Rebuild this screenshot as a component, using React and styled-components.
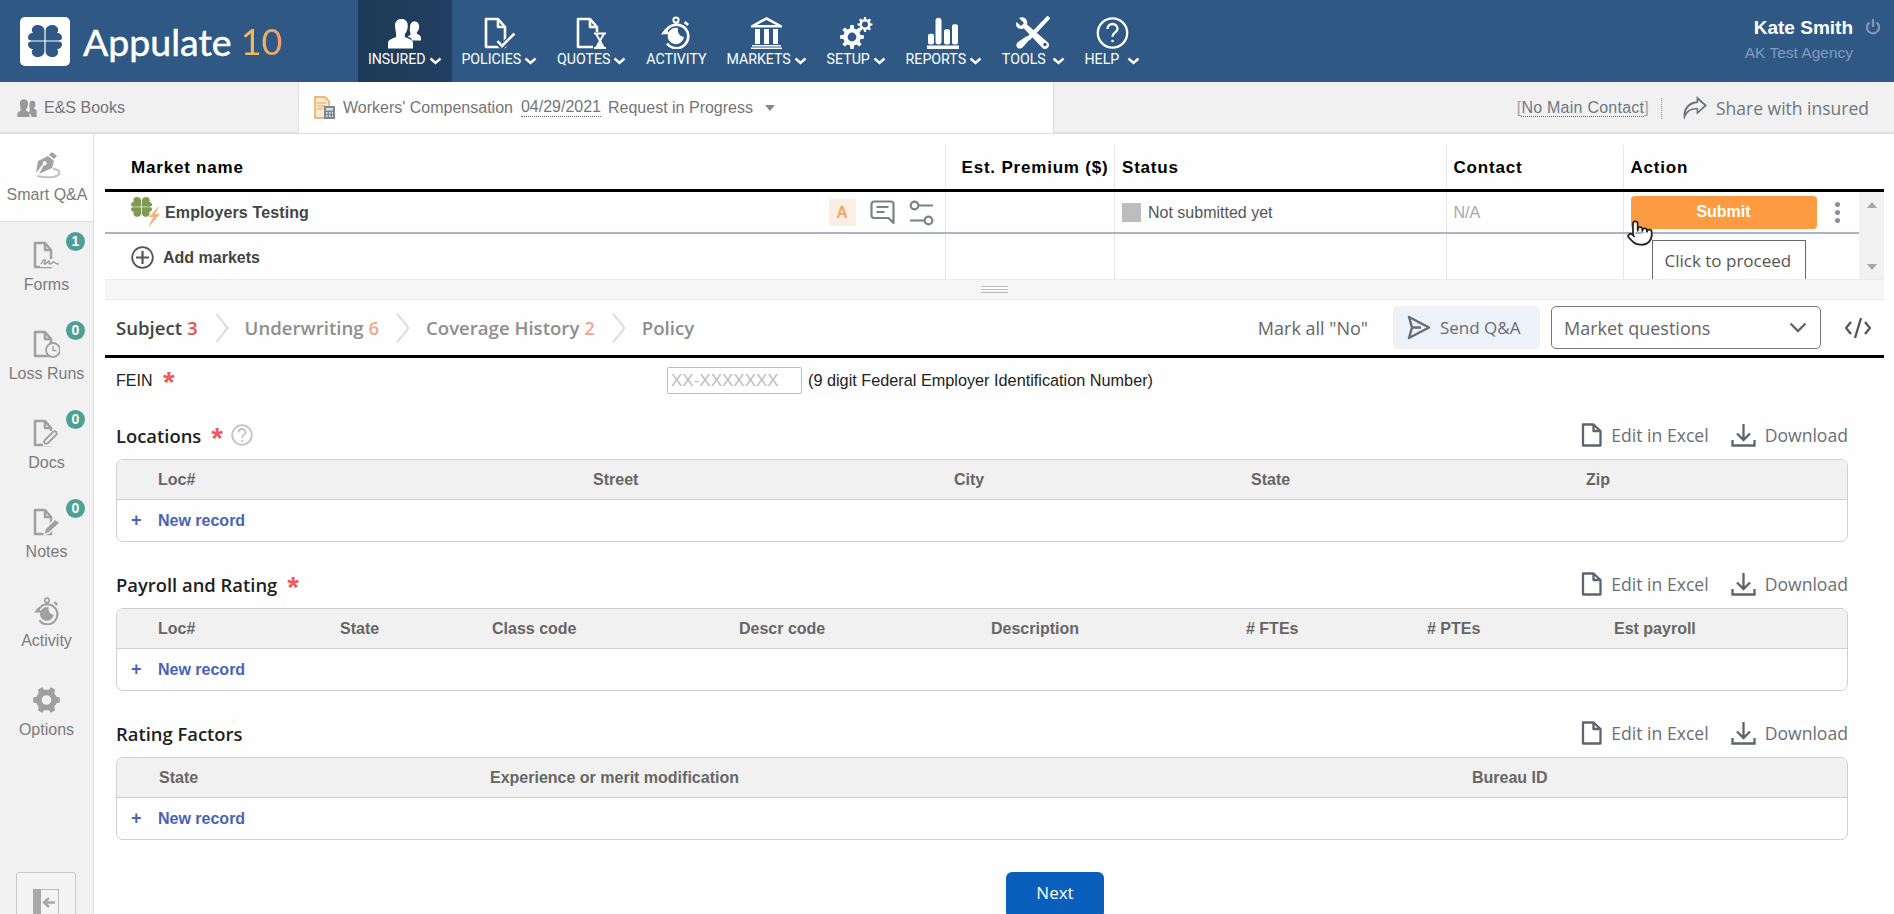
import React from "react";
import styled, { createGlobalStyle } from "styled-components";
import { Pointer } from "lucide-react";

const sans = `"Liberation Sans", Arial, sans-serif`;
const soft = `"Open Sans", "Noto Sans", sans-serif`;

// builds a cog outline with a hole, used by the setup and options icons
function gearPath(cx, cy, outer, inner, teeth, hole) {
	const pts = [];
	const step = (Math.PI * 2) / teeth;
	for (let i = 0; i < teeth; i++) {
		const a = i * step;
		[
			[-0.3, inner],
			[-0.18, outer],
			[0.18, outer],
			[0.3, inner],
		].forEach(([k, r]) => {
			const t = a + k * step;
			pts.push(`${(cx + r * Math.cos(t)).toFixed(2)} ${(cy + r * Math.sin(t)).toFixed(2)}`);
		});
	}
	const ring = `M${cx - hole} ${cy}a${hole} ${hole} 0 1 0 ${hole * 2} 0a${hole} ${hole} 0 1 0 ${-hole * 2} 0Z`;
	return `M${pts.join("L")}Z${ring}`;
}

const leaf = "M16.4 15.4V5.5C16.4 1.8 12.6 0 9.6 0 6 0 3.6 2.6 3.8 5.6 4 6.6 4.4 7.2 5 7.8 2 8 0 10.2 0 12.6 0 15.4 2.6 15.6 5 15.6Z";

function Clover({ color }) {
	return (
		<g fill={color}>
			<path d={leaf} />
			<path d={leaf} transform="translate(34 0) scale(-1 1)" />
			<path d={leaf} transform="translate(0 32) scale(1 -1)" />
			<path d={leaf} transform="translate(34 32) scale(-1 -1)" />
		</g>
	);
}

const docOutline = "M3 2h12l7 8v20H3z";

function DocBase({ color = "#fff", width = 2.6 }) {
	return (
		<g fill="none" stroke={color} strokeWidth={width} strokeLinejoin="round">
			<path d={docOutline} />
			<path d="M15 2v8h7" />
		</g>
	);
}

function InsuredIcon() {
	return (
		<svg width="33" height="32" viewBox="0 0 33 32" fill="#fff">
			<path d="M22 9.5a4.6 5.2 0 1 1 9.2 0c0 2.6-1 4.6-2.3 5.6v1.6c1.6.8 3.6 1.6 4.1 3.2v3.6H24c-.4-2-1.8-3-4.5-4.2l2.8-1v-3.2c-.9-1.2-.3-3.4-.3-5.6z" />
			<path d="M7 8.5C7 3.8 10.2 2 13.4 2s6.4 1.8 6.4 6.5c0 3.8-1.2 6.8-3 8.4v3c3 1.4 8.2 2.6 8.2 6v5.6H0v-5.6c0-3.4 5.2-4.6 8.1-6v-3C8.2 15.3 7 12.3 7 8.5z" />
		</svg>
	);
}

function PoliciesIcon() {
	return (
		<svg width="33" height="32" viewBox="0 0 33 32">
			<DocBase />
			<path d="M14 24l5 5.500L31.500 17" fill="none" stroke="#2f5984" strokeWidth="6" />
			<path d="M14.500 24l4.500 5L31.500 16.500" fill="none" stroke="#fff" strokeWidth="2.600" />
		</svg>
	);
}

function QuotesIcon() {
	return (
		<svg width="33" height="32" viewBox="0 0 33 32">
			<DocBase />
			<rect x="18" y="15" width="15" height="17" fill="#2f5984" />
			<path d="M19 16.500h12M19 31h12M21 16.500l4 7.500-4 7h8l-4-7 4-7.500" fill="none" stroke="#fff" strokeWidth="2" />
			<path d="M25 26l3 4.500h-6z" fill="#fff" />
		</svg>
	);
}

function StopwatchIcon({ color = "#fff", width = 30, height = 33 }) {
	return (
		<svg width={width} height={height} viewBox="0 0 30 33">
			<circle cx="15" cy="4" r="2.600" fill="none" stroke={color} strokeWidth="2" />
			<path d="M15 6.500v2" stroke={color} strokeWidth="2" />
			<path d="M4.500 16A11.800 11.800 0 1 1 6 27.500" fill="none" stroke={color} strokeWidth="2.600" />
			<path d="M0 18.500l4.300-6 5 5.500z" fill={color} />
			<path d="M24.500 5l3.500 3-1.800 2-3.500-3z" fill={color} />
			<path d="M17 12A8.200 8.200 0 1 0 23 21A7 7 0 0 1 17 12Z" fill={color} />
		</svg>
	);
}

function MarketsIcon() {
	return (
		<svg width="33" height="32" viewBox="0 0 33 32" fill="#fff">
			<path d="M16.500 0L32 8.500v2H1v-2zM16.500 3L7 8h19z" fillRule="evenodd" />
			<path d="M5 12h5v15H5zM14 12h5v15h-5zM23 12h5v15h-5z" fillRule="evenodd" />
			<path d="M2 28h29v1.500H2zM1 30.500h31V32H1z" />
		</svg>
	);
}

function SetupIcon() {
	return (
		<svg width="33" height="32" viewBox="0 0 33 32" fill="#fff" fillRule="evenodd">
			<path d={gearPath(12, 20, 12, 8.8, 8, 4.4)} />
			<path d={gearPath(25, 7.500, 7.500, 5.500, 8, 3)} />
		</svg>
	);
}

function ReportsIcon() {
	return (
		<svg width="33" height="32" viewBox="0 0 33 32" fill="#fff">
			<rect x="1" y="16.700" width="6" height="10.800" rx="2" />
			<rect x="8.500" y="0.700" width="6" height="26.800" rx="3" />
			<rect x="17" y="12.300" width="6" height="15.200" rx="2" />
			<rect x="25" y="7.300" width="6" height="20.200" rx="2" />
			<rect x="0" y="28.500" width="32" height="3.500" />
		</svg>
	);
}

function ToolsIcon() {
	return (
		<svg width="34" height="33" viewBox="0 0 34 33">
			<path d="M33 1L12 23" stroke="#fff" strokeWidth="4" />
			<path d="M11 20l3 3-7 8c-2 2-5 2-6 0s-1-3 1-5z" fill="#fff" />
			<path d="M3 2c4-2 7 0 8 3 .4 1.400.2 2.600 0 3.500l21 18c2 2 1 5-1 6s-4 .5-5-1L8 12.500c-3 1-6 .5-7.500-2C0 9 0 7 .5 6L5 10l3-3z" fill="#fff" />
			<circle cx="29" cy="28.500" r="1.700" fill="#2f5984" />
		</svg>
	);
}

function HelpIcon() {
	return (
		<svg width="33" height="32" viewBox="0 0 33 32" fill="none" stroke="#fff">
			<circle cx="16.500" cy="16" r="14.700" strokeWidth="2.300" />
			<path d="M11.500 12c0-3 2.200-5 5-5s5 2 5 4.700c0 3.800-5 3.600-5 8" strokeWidth="2.300" />
			<circle cx="16.500" cy="24" r="1.300" fill="#fff" stroke="none" />
		</svg>
	);
}

function PenIcon() {
	return (
		<svg width="34" height="28" viewBox="0 0 34 28">
			<path d="M22 0l5 4-3 3-5-4z" fill="#a3a3a3" />
			<path d="M18 4l6 5-2 7-13 6 5-9a2 2 0 1 0-1-1L6 21l2-12z" fill="#a3a3a3" />
			<path d="M7 24c8 2 20 2 22-2s-4-5-6-5" fill="none" stroke="#c2c2c2" strokeWidth="2" />
		</svg>
	);
}

function SideDoc({ children }) {
	return (
		<svg width="27" height="28" viewBox="0 0 27 28">
			<g fill="none" stroke="#a0a0a0" strokeWidth="2.500" strokeLinejoin="round">
				<path d="M2 2h10l6 7v17H2z" />
				<path d="M12 2v7h6" />
			</g>
			{children}
		</svg>
	);
}

function OptionsIcon() {
	return (
		<svg width="27" height="28" viewBox="0 0 27 28" fill="#a0a0a0" fillRule="evenodd">
			<path d={gearPath(13.500, 14, 13.500, 10.500, 6, 4.800)} />
		</svg>
	);
}

function StepChevron() {
	return (
		<StepArrow width="14" height="30" viewBox="0 0 14 30" fill="none" stroke="#dcdcdc" strokeWidth="2">
			<path d="M1.500 1l11 14-11 14" />
		</StepArrow>
	);
}

const sideItems = [
	{ label: "Forms", count: 1, icon: (
		<SideDoc>
			<rect x="7" y="18" width="20" height="8" fill="#f1f1f1" />
			<path d="M8 23c2-3 3-5 4-4s-2 4 0 4 3-4 4-3-1 3 1 3 3-3 4-2 1 2 5 2" fill="none" stroke="#a0a0a0" strokeWidth="1.500" />
		</SideDoc>
	) },
	{ label: "Loss Runs", count: 0, icon: (
		<SideDoc>
			<circle cx="20" cy="20" r="7" fill="#f1f1f1" stroke="#a0a0a0" strokeWidth="1.800" />
			<path d="M20 16v4.500h3.500" fill="none" stroke="#a0a0a0" strokeWidth="1.400" />
		</SideDoc>
	) },
	{ label: "Docs", count: 0, icon: (
		<SideDoc>
			<rect x="10" y="12" width="17" height="15" fill="#f1f1f1" />
			<path d="M24 15l-9 9c-3 2-5-1-3-3l8-8c2-2 5 0 3 3l-7 7" fill="none" stroke="#a0a0a0" strokeWidth="1.800" />
		</SideDoc>
	) },
	{ label: "Notes", count: 0, icon: (
		<SideDoc>
			<path d="M11 27l1-6 10-10 5 4-11 10z" fill="#a0a0a0" stroke="#f1f1f1" strokeWidth="1.500" />
		</SideDoc>
	) },
	{ label: "Activity", icon: <StopwatchIcon color="#a0a0a0" width={26} height={28} /> },
	{ label: "Options", icon: <OptionsIcon /> },
];

const navItems = [
	{ label: "INSURED", icon: <InsuredIcon />, active: true, menu: true },
	{ label: "POLICIES", icon: <PoliciesIcon />, menu: true },
	{ label: "QUOTES", icon: <QuotesIcon />, menu: true },
	{ label: "ACTIVITY", icon: <StopwatchIcon /> },
	{ label: "MARKETS", icon: <MarketsIcon />, menu: true },
	{ label: "SETUP", icon: <SetupIcon />, menu: true },
	{ label: "REPORTS", icon: <ReportsIcon />, menu: true },
	{ label: "TOOLS", icon: <ToolsIcon />, menu: true, gap: 6 },
	{ label: "HELP", icon: <HelpIcon />, menu: true, gap: 8 },
];

const recordTables = [
	{
		title: "Locations",
		required: true,
		help: true,
		pad: 41,
		columns: [
			["Loc#", 435],
			["Street", 361],
			["City", 297],
			["State", 335],
			["Zip", 200],
		],
	},
	{
		title: "Payroll and Rating",
		required: true,
		pad: 41,
		columns: [
			["Loc#", 182],
			["State", 152],
			["Class code", 247],
			["Descr code", 252],
			["Description", 255],
			["# FTEs", 181],
			["# PTEs", 187],
			["Est payroll", 200],
		],
	},
	{
		title: "Rating Factors",
		pad: 42,
		columns: [
			["State", 331],
			["Experience or merit modification", 982],
			["Bureau ID", 300],
		],
	},
];

function App() {
	return (
		<Page>
			<GlobalStyle />
			<TopBar>
				<LogoBlock>
					<LogoMark>
						<svg width="34" height="32" viewBox="0 0 34 32">
							<Clover color="#2f5984" />
						</svg>
					</LogoMark>
					<LogoText>Appulate</LogoText>
					<LogoTen>10</LogoTen>
				</LogoBlock>
				<Nav>
					{navItems.map(({ label, icon, active, menu, gap }) => (
						<NavItem key={label} $active={active}>
							<NavIcon>{icon}</NavIcon>
							<NavLabel>
								{label}
								{menu && (
									<NavChevron $gap={gap} width="13" height="8" viewBox="0 0 13 8">
										<path d="M1.500 1.500l5 4.500 5-4.500" fill="none" stroke="#fff" strokeWidth="2.400" />
									</NavChevron>
								)}
							</NavLabel>
						</NavItem>
					))}
				</Nav>
				<UserBlock>
					<UserText>
						<UserName>Kate Smith</UserName>
						<UserAgency>AK Test Agency</UserAgency>
					</UserText>
					<svg width="14" height="17" viewBox="0 0 14 17" fill="none" stroke="#7f98b5" strokeWidth="2.200">
						<path d="M7 1v8M3.500 4.500a6 6 0 1 0 7 0" />
					</svg>
				</UserBlock>
			</TopBar>

			<SubBar>
				<BooksTab>
					<svg width="22" height="18" viewBox="0 0 33 28" fill="#999">
						<path d="M22 8a4.600 5.200 0 1 1 9.200 0c0 2.600-1 4.600-2.300 5.600v1.600c1.600.8 4.100 1.600 4.100 3.200V28H25c0-4-2-5-5.500-6.500l2.800-2v-6c-.9-1.200-.3-3.300-.3-5.500z" />
						<path d="M7 7C7 2.300 10.200.5 13.400.5s6.400 1.800 6.400 6.500c0 3.800-1.200 6.800-3 8.400v3c3 1.400 5.200 2.600 5.200 6V28H3v-3.600c0-3.400 2.200-4.600 5.100-6v-3C8.200 13.800 7 10.800 7 7z" />
					</svg>
					E&amp;S Books
				</BooksTab>
				<RequestTab>
					<svg width="22" height="23" viewBox="0 0 22 23">
						<path d="M1 1h10l4 4v17H1z" fill="#fbe9cf" stroke="#eda24e" strokeWidth="1.400" />
						<path d="M3 7h9M3 10h9M3 13h6" stroke="#eda24e" strokeWidth="1" />
						<rect x="10" y="10" width="11" height="13" fill="#7b8794" />
						<rect x="12" y="12" width="7" height="2.500" fill="#d8e0e8" />
						<path d="M12 17h1.500M15 17h1.500M18 17h1M12 20h1.500M15 20h1.500M18 20h1" stroke="#fff" strokeWidth="1.500" />
					</svg>
					<RequestText>Workers' Compensation</RequestText>
					<DottedDate>04/29/2021</DottedDate>
					<RequestText>Request in Progress</RequestText>
					<Caret />
				</RequestTab>
				<ContactArea>
					<MainContact>
						[<DottedText>No Main Contact</DottedText>]
					</MainContact>
					<DottedDivider />
					<ShareLink>
						<svg width="25" height="24" viewBox="0 0 24 23" fill="#6c7078">
							<path d="M14 0l10 9-10 9v-5C8 13 5 15 2 23 0 14 4 6 14 5zM15.500 4v2.600C9.500 7 5 10 3.500 16 6.500 12.500 10 11.300 15.500 11.500v3l6-5.500z" fillRule="evenodd" />
						</svg>
						Share with insured
					</ShareLink>
				</ContactArea>
			</SubBar>

			<Body>
				<Sidebar>
					<SideActive>
						<PenIcon />
						<SideLabel>Smart Q&amp;A</SideLabel>
					</SideActive>
					{sideItems.map(({ label, count, icon }) => (
						<SideItem key={label}>
							{icon}
							{count !== undefined && <CountBadge>{count}</CountBadge>}
							<SideLabel>{label}</SideLabel>
						</SideItem>
					))}
					<CollapseButton>
						<svg width="26" height="27" viewBox="0 0 26 27">
							<rect x="0" y="0" width="26" height="27" rx="2" fill="none" stroke="#a9a9a9" strokeWidth="1.500" />
							<rect x="0" y="0" width="8" height="27" fill="#a9a9a9" />
							<path d="M22 13.500H12M16 9l-5 4.500 5 4.500" fill="none" stroke="#a9a9a9" strokeWidth="2.500" />
						</svg>
					</CollapseButton>
				</Sidebar>

				<Main>
					<MarketHead>
						<MarketHeadCell>Market name</MarketHeadCell>
						<MarketHeadCell $center>Est. Premium ($)</MarketHeadCell>
						<MarketHeadCell>Status</MarketHeadCell>
						<MarketHeadCell>Contact</MarketHeadCell>
						<MarketHeadCell>Action</MarketHeadCell>
					</MarketHead>
					<MarketBody>
						<MarketRows>
							<MarketRow>
								<NameCell>
									<svg width="30" height="32" viewBox="0 0 30 32">
										<g transform="scale(.62)">
											<Clover color="#7f9b52" />
										</g>
										<path d="M27 10l-9 10h4l-5 11 12-14h-5l4-7z" fill="#f7b27a" />
									</svg>
									<MarketName>Employers Testing</MarketName>
									<RowTools>
										<ABadge>A</ABadge>
										<svg width="25" height="25" viewBox="0 0 25 25" fill="none" stroke="#7d8288" strokeWidth="2.200" strokeLinejoin="round">
											<path d="M4 1.500h17a2.500 2.500 0 0 1 2.500 2.500v19l-5-5H4A2.500 2.500 0 0 1 1.500 15.500V4A2.500 2.500 0 0 1 4 1.500z" />
											<path d="M6.500 7h12M6.500 12h8" />
										</svg>
										<svg width="25" height="26" viewBox="0 0 25 26" fill="none" stroke="#7d8288" strokeWidth="2.200">
											<circle cx="5.500" cy="5.500" r="3.800" />
											<path d="M9.500 5.500H24M1 20.500h14.500" />
											<circle cx="19.500" cy="20.500" r="3.800" />
										</svg>
									</RowTools>
								</NameCell>
								<PlainCell />
								<PlainCell>
									<StatusSquare />
									Not submitted yet
								</PlainCell>
								<PlainCell $muted>N/A</PlainCell>
								<ActionCell>
									<SubmitButton>Submit</SubmitButton>
									<MoreDots>
										<i />
										<i />
										<i />
									</MoreDots>
									<HandCursor>
										<Pointer size={28} fill="#fff" color="#222" strokeWidth={1.5} />
									</HandCursor>
								</ActionCell>
							</MarketRow>
							<MarketRow $last>
								<AddCell>
									<svg width="23" height="23" viewBox="0 0 23 23" fill="none" stroke="#555" strokeWidth="1.800">
										<circle cx="11.500" cy="11.500" r="10.300" />
										<path d="M11.500 5v13M5 11.500h13" strokeWidth="2.200" />
									</svg>
									<AddLabel>Add markets</AddLabel>
								</AddCell>
								<PlainCell />
								<PlainCell />
								<PlainCell />
								<ActionCell>
									<Tooltip>Click to proceed</Tooltip>
								</ActionCell>
							</MarketRow>
						</MarketRows>
						<ScrollTrack>
							<ScrollArrow />
							<ScrollArrow $down />
						</ScrollTrack>
					</MarketBody>
					<Splitter>
						<SplitGrip />
					</Splitter>

					<TabStrip>
						<Steps>
							<Step $active>
								Subject <StepCount $active>3</StepCount>
							</Step>
							<StepChevron />
							<Step>
								Underwriting <StepCount>6</StepCount>
							</Step>
							<StepChevron />
							<Step>
								Coverage History <StepCount>2</StepCount>
							</Step>
							<StepChevron />
							<Step>Policy</Step>
						</Steps>
						<StripTools>
							<MarkAll>Mark all "No"</MarkAll>
							<SendButton>
								<svg width="24" height="25" viewBox="0 0 24 25" fill="none" stroke="#666c76" strokeWidth="2.400" strokeLinejoin="round">
									<path d="M2 2l20 10.500L2 23l3-10.500zM5 12.500h9" />
								</svg>
								Send Q&amp;A
							</SendButton>
							<QuestionSelect>
								Market questions
								<svg width="18" height="11" viewBox="0 0 18 11" fill="none" stroke="#666" strokeWidth="2.400">
									<path d="M1.500 1.500L9 9l7.500-7.500" />
								</svg>
							</QuestionSelect>
							<CodeToggle>
								<svg width="26" height="22" viewBox="0 0 26 22" fill="none" stroke="#555" strokeWidth="2.300">
									<path d="M6 5l-5 6 5 6M20 5l5 6-5 6M16 1l-6 20" />
								</svg>
							</CodeToggle>
						</StripTools>
					</TabStrip>

					<Form>
						<FeinRow>
							<FeinLabel>
								FEIN <Star>*</Star>
							</FeinLabel>
							<FeinInput placeholder="XX-XXXXXXX" />
							<FeinHint>(9 digit Federal Employer Identification Number)</FeinHint>
						</FeinRow>
						<Sections>
							{recordTables.map(({ title, required, help, pad, columns }) => (
								<section key={title}>
									<SectionHead>
										<SectionTitle>
											{title}
											{required && <Star>*</Star>}
											{help && (
												<svg width="22" height="22" viewBox="0 0 22 22" fill="none" stroke="#c4c4c4" strokeWidth="1.800">
													<circle cx="11" cy="11" r="9.800" />
													<path d="M7.500 8.500c0-2 1.500-3.500 3.500-3.500s3.500 1.500 3.500 3.200c0 2.800-3.500 2.600-3.500 5.800M11 16v2" />
												</svg>
											)}
										</SectionTitle>
										<SectionActions>
											<SectionAction>
												<svg width="21" height="24" viewBox="0 0 21 24" fill="none" stroke="#5f636b" strokeWidth="2.300" strokeLinejoin="round">
													<path d="M2 1.500h10.500L19.500 8v14.500H2z" />
													<path d="M12.500 2v6h6" />
												</svg>
												Edit in Excel
											</SectionAction>
											<SectionAction>
												<svg width="25" height="24" viewBox="0 0 25 24" fill="none" stroke="#5f636b" strokeWidth="2.300">
													<path d="M12.500 1v15M6 10.500l6.500 6.500L19 10.500M1.500 17v5.500h22V17" />
												</svg>
												Download
											</SectionAction>
										</SectionActions>
									</SectionHead>
									<RecordBox>
										<RecordHead $pad={pad} $cols={columns.map(([, w]) => `${w}px`).join(" ")}>
											{columns.map(([name]) => (
												<span key={name}>{name}</span>
											))}
										</RecordHead>
										<NewRecord>
											<NewPlus>+</NewPlus>
											New record
										</NewRecord>
									</RecordBox>
								</section>
							))}
						</Sections>
						<NextButton>Next</NextButton>
					</Form>
				</Main>
			</Body>
		</Page>
	);
}

export default App;

const GlobalStyle = createGlobalStyle`
	html, body {
		margin: 0;
		padding: 0;
		background: #fefefe;
		overflow: hidden;
	}
	* {
		box-sizing: border-box;
	}
	button, input {
		font-family: inherit;
	}
`;

const Page = styled.div`
	width: 1894px;
	height: 914px;
	overflow: hidden;
	font-family: ${sans};
	font-size: 16px;
	background: #fefefe;
	display: flex;
	flex-direction: column;
`;

const TopBar = styled.header`
	height: 82px;
	flex-shrink: 0;
	display: flex;
	background: #2f5984;
`;

const LogoBlock = styled.div`
	width: 358px;
	flex-shrink: 0;
	display: flex;
	align-items: center;
	padding: 0 0 0 20px;
`;

const LogoMark = styled.div`
	width: 50px;
	height: 49px;
	background: #fff;
	border-radius: 5px;
	display: flex;
	align-items: center;
	justify-content: center;
	margin-right: 13px;
`;

const LogoText = styled.span`
	font-family: Lato, sans-serif;
	font-size: 37.5px;
	font-weight: 400;
	color: #fff;
	-webkit-text-stroke: 0.5px #fff;
`;

const LogoTen = styled.span`
	font-family: Lato, sans-serif;
	font-size: 36px;
	font-weight: 400;
	margin-left: 9px;
	background: linear-gradient(90deg, #f2c14e, #ef9f6e);
	-webkit-background-clip: text;
	background-clip: text;
	color: transparent;
`;

const Nav = styled.nav`
	display: flex;
	flex: 1;
`;

const NavItem = styled.div`
	padding: 16px 9.9px 0;
	display: flex;
	flex-direction: column;
	align-items: center;
	background: ${(p) => (p.$active ? "linear-gradient(90deg, #1e3a58, #213f60)" : "transparent")};
`;

const NavIcon = styled.div`
	height: 33px;
	display: flex;
	align-items: center;
	justify-content: center;
`;

const NavLabel = styled.div`
	display: flex;
	align-items: center;
	margin-top: 1px;
	height: 18px;
	font-family: Roboto, sans-serif;
	font-size: 14.2px;
	color: #fff;
`;

const NavChevron = styled.svg`
	margin-left: ${(p) => p.$gap || 3}px;
	margin-top: 3px;
`;

const UserBlock = styled.div`
	display: flex;
	align-items: flex-start;
	gap: 13px;
	padding: 18px 14px 0 0;
`;

const UserText = styled.div`
	display: flex;
	flex-direction: column;
	align-items: flex-end;
`;

const UserName = styled.span`
	font-weight: 700;
	font-size: 19px;
	line-height: 20px;
	color: #fff;
`;

const UserAgency = styled.span`
	margin-top: 5px;
	font-size: 15.5px;
	line-height: 20px;
	color: #7f9cbf;
`;

const SubBar = styled.div`
	height: 52px;
	flex-shrink: 0;
	display: flex;
	background: #f1f1f2;
	border-bottom: 2px solid #dfdfdf;
	color: #757575;
`;

const BooksTab = styled.div`
	width: 298px;
	display: flex;
	align-items: center;
	gap: 7px;
	padding: 1px 0 0 15px;
`;

const RequestTab = styled.div`
	width: 756px;
	display: flex;
	align-items: center;
	padding-left: 15px;
	background: #fff;
	border-left: 1px solid #e2e2e2;
	border-right: 1px solid #dcdcdc;
	margin-bottom: -1px;
`;

const RequestText = styled.span`
	margin-left: 7px;
`;

const DottedDate = styled.span`
	margin-left: 8px;
	border-bottom: 1px dotted #666;
	line-height: 18px;
`;

const Caret = styled.span`
	margin-left: 12px;
	border-left: 5px solid transparent;
	border-right: 5px solid transparent;
	border-top: 6px solid #888;
`;

const ContactArea = styled.div`
	flex: 1;
	display: flex;
	align-items: center;
	justify-content: flex-end;
	padding: 2px 25px 0 0;
`;

const MainContact = styled.span`
	color: #a0a0a0;
	letter-spacing: 0.25px;
`;

const DottedText = styled.span`
	border-bottom: 1px dotted #666;
	color: #6d7783;
`;

const DottedDivider = styled.span`
	height: 21px;
	margin: 0 20px 0 12px;
	border-left: 1px dotted #888;
`;

const ShareLink = styled.span`
	display: flex;
	align-items: center;
	gap: 9px;
	font-family: ${soft};
	font-size: 17.5px;
	color: #70757c;
`;

const Body = styled.div`
	flex: 1;
	display: flex;
	min-height: 0;
`;

const Sidebar = styled.aside`
	width: 94px;
	flex-shrink: 0;
	display: flex;
	flex-direction: column;
	overflow: hidden;
	background: #f1f1f1;
	border-right: 1px solid #e2e2e2;
`;

const SideLabel = styled.span`
	color: #7b7b7b;
	line-height: 20px;
	white-space: nowrap;
`;

const SideItem = styled.div`
	position: relative;
	height: 89px;
	flex-shrink: 0;
	display: flex;
	flex-direction: column;
	align-items: center;
	justify-content: flex-start;
	gap: 6px;
	padding-top: 19px;
`;

const SideActive = styled(SideItem)`
	height: 88px;
	width: 94px;
	background: #fefefe;
	border-bottom: 1px solid #dedede;
	padding-top: 18px;
	gap: 5px;
`;

const CountBadge = styled.span`
	position: absolute;
	top: 10px;
	left: 66px;
	width: 19px;
	height: 19px;
	border-radius: 50%;
	background: #4d9f97;
	color: #fff;
	font-size: 14px;
	font-weight: 700;
	line-height: 19px;
	text-align: center;
`;

const CollapseButton = styled.div`
	flex-shrink: 0;
	width: 60px;
	height: 62px;
	margin: 116px 0 0 16px;
	padding: 16px 0 0 16px;
	border: 1px solid #c9c9c9;
	border-radius: 3px;
	background: #f4f4f4;
`;

const Main = styled.main`
	flex: 1;
	min-width: 0;
	display: flex;
	flex-direction: column;
	padding: 0 10px 0 11px;
`;

const MarketHead = styled.div`
	height: 58px;
	flex-shrink: 0;
	display: grid;
	grid-template-columns: 839.5px 169.5px 331.5px 177px 261.5px;
	padding-top: 11px;
	border-bottom: 3px solid #000;
`;

const MarketHeadCell = styled.div`
	display: flex;
	align-items: center;
	padding: 2px 0 0 ${(p) => (p.$center ? "16px" : "7px")};
	font-size: 17px;
	font-weight: 700;
	letter-spacing: 0.8px;
	color: #000;
	white-space: nowrap;
	&:first-child {
		padding-left: 26px;
	}
	& + & {
		border-left: 1px solid #e6e6e6;
	}
`;

const MarketBody = styled.div`
	display: flex;
	flex-shrink: 0;
`;

const MarketRows = styled.div`
	width: 1754px;
	flex-shrink: 0;
`;

const MarketRow = styled.div`
	display: grid;
	grid-template-columns: 839.5px 169.5px 331.5px 177px 236.5px;
	height: ${(p) => (p.$last ? "45px" : "42px")};
	overflow: ${(p) => (p.$last ? "hidden" : "visible")};
	border-bottom: ${(p) => (p.$last ? "none" : "2px solid #acb1c6")};
`;

const NameCell = styled.div`
	display: flex;
	align-items: center;
	padding: 1px 0 0 26px;
`;

const AddCell = styled(NameCell)`
	padding-top: 2px;
`;

const MarketName = styled.span`
	margin-left: 4px;
	font-weight: 700;
	letter-spacing: 0.12px;
	color: #444;
`;

const AddLabel = styled.span`
	margin-left: 9px;
	font-weight: 700;
	color: #444;
`;

const RowTools = styled.div`
	margin-left: auto;
	margin-right: 11px;
	display: flex;
	align-items: center;
	gap: 14px;
`;

const ABadge = styled.span`
	width: 27px;
	height: 27px;
	border-radius: 2px;
	background: #fbeee4;
	color: #f2a76b;
	font-weight: 700;
	text-align: center;
	line-height: 27px;
`;

const PlainCell = styled.div`
	position: relative;
	display: flex;
	align-items: center;
	padding: 1px 0 0 7px;
	border-left: 1px solid #e6e6e6;
	color: ${(p) => (p.$muted ? "#a9a9a9" : "#555")};
`;

const StatusSquare = styled.span`
	width: 19px;
	height: 19px;
	margin-right: 7px;
	background: #bdbdbd;
`;

const ActionCell = styled(PlainCell)`
	padding: 0 0 0 7px;
`;

const SubmitButton = styled.button`
	width: 186px;
	height: 33px;
	border: none;
	border-radius: 4px;
	background: #fd9b42;
	color: #fff;
	font-size: 16px;
	font-weight: 700;
`;

const MoreDots = styled.span`
	margin-left: 18px;
	display: flex;
	flex-direction: column;
	gap: 3px;
	i {
		width: 5px;
		height: 5px;
		border-radius: 50%;
		background: #8b8f96;
	}
`;

const HandCursor = styled.span`
	position: absolute;
	top: 27px;
	left: 2px;
	z-index: 3;
	display: flex;
`;

const Tooltip = styled.div`
	position: absolute;
	top: 6px;
	left: 28px;
	width: 154px;
	height: 60px;
	padding: 7px 0 0 12px;
	border: 1px solid #666;
	background: #fff;
	font-family: ${soft};
	font-size: 17px;
	line-height: 26px;
	color: #555;
	white-space: nowrap;
`;

const ScrollTrack = styled.div`
	width: 25px;
	flex-shrink: 0;
	display: flex;
	flex-direction: column;
	justify-content: space-between;
	align-items: center;
	padding: 10px 0 9px;
	background: #f1f1f1;
`;

const ScrollArrow = styled.span`
	border-left: 5px solid transparent;
	border-right: 5px solid transparent;
	${(p) => (p.$down ? "border-top: 6px solid #a8a8a8;" : "border-bottom: 6px solid #a8a8a8;")}
`;

const Splitter = styled.div`
	height: 21px;
	flex-shrink: 0;
	display: flex;
	align-items: center;
	justify-content: center;
	background: #f6f6f6;
	border-top: 1px solid #ececec;
	border-bottom: 1px solid #ececec;
`;

const SplitGrip = styled.span`
	width: 27px;
	height: 7px;
	margin-left: -1px;
	border-top: 1px solid #bbb;
	border-bottom: 1px solid #bbb;
	background: linear-gradient(#fff 0 2px, #bbb 2px 3px, #f6f6f6 3px);
`;

const TabStrip = styled.div`
	height: 58px;
	flex-shrink: 0;
	display: flex;
	align-items: center;
	justify-content: space-between;
	padding: 0 13px 0 11px;
	border-bottom: 3px solid #000;
`;

const Steps = styled.div`
	display: flex;
	align-items: center;
	font-family: ${soft};
	font-size: 18.6px;
	font-weight: 600;
`;

const Step = styled.span`
	color: ${(p) => (p.$active ? "#444" : "#8e8e8e")};
`;

const StepCount = styled.span`
	color: ${(p) => (p.$active ? "#e0544c" : "#f0a68f")};
`;

const StepArrow = styled.svg`
	margin: 0 16px 0 17px;
`;

const StripTools = styled.div`
	display: flex;
	align-items: center;
`;

const MarkAll = styled.span`
	font-family: ${soft};
	font-size: 18px;
	color: #666;
	margin-right: 25px;
`;

const SendButton = styled.div`
	width: 147px;
	height: 43px;
	display: flex;
	align-items: center;
	gap: 9px;
	padding-left: 14px;
	border-radius: 5px;
	background: #edf1f8;
	font-family: ${soft};
	font-size: 17px;
	color: #666c76;
`;

const QuestionSelect = styled.div`
	width: 270px;
	height: 43px;
	margin-left: 11px;
	display: flex;
	align-items: center;
	justify-content: space-between;
	padding: 0 13px 0 12px;
	border: 1px solid #777;
	border-radius: 5px;
	font-family: ${soft};
	font-size: 18px;
	color: #666;
`;

const CodeToggle = styled.div`
	margin-left: 24px;
	display: flex;
`;

const Form = styled.div`
	padding: 9px 36px 0 11px;
	display: flex;
	flex-direction: column;
`;

const FeinRow = styled.div`
	height: 27px;
	display: flex;
	align-items: center;
`;

const FeinLabel = styled.label`
	width: 551px;
	color: #222;
	font-size: 16px;
`;

const Star = styled.span`
	margin-left: 6px;
	font-family: ${sans};
	font-size: 30px;
	font-weight: 700;
	line-height: 16px;
	color: #ef5a5a;
	vertical-align: -6px;
`;

const FeinInput = styled.input`
	width: 135px;
	height: 27px;
	padding: 0 3px;
	border: 1px solid #bdbdbd;
	border-radius: 2px;
	font-size: 17px;
	background: #fff;
	&::placeholder {
		color: #bdbdbd;
		opacity: 1;
	}
`;

const FeinHint = styled.span`
	margin-left: 6px;
	font-size: 16.25px;
	color: #222;
`;

const Sections = styled.div`
	margin-top: 25px;
	display: flex;
	flex-direction: column;
	gap: 26px;
`;

const SectionHead = styled.div`
	height: 40px;
	display: flex;
	align-items: center;
	justify-content: space-between;
	padding-bottom: 8px;
`;

const SectionTitle = styled.h3`
	margin: 0;
	display: flex;
	align-items: center;
	gap: 8px;
	font-family: ${soft};
	font-size: 18.4px;
	font-weight: 600;
	color: #1f1f1f;
	& > span {
		margin-left: 2px;
		padding-top: 6px;
	}
`;

const SectionActions = styled.div`
	display: flex;
	gap: 22px;
`;

const SectionAction = styled.span`
	display: flex;
	align-items: center;
	gap: 9px;
	font-family: ${soft};
	font-size: 17.6px;
	color: #6b6f76;
`;

const RecordBox = styled.div`
	height: 83px;
	border: 1px solid #cfcfcf;
	border-radius: 7px;
	overflow: hidden;
`;

const RecordHead = styled.div`
	height: 40px;
	display: grid;
	grid-template-columns: ${(p) => p.$cols};
	align-items: center;
	padding-left: ${(p) => p.$pad}px;
	background: #f1f1f2;
	border-bottom: 1px solid #cfcfcf;
	font-weight: 700;
	color: #666;
`;

const NewRecord = styled.div`
	height: 41px;
	display: flex;
	align-items: center;
	padding-left: 14px;
	font-weight: 700;
	color: #4a64b5;
`;

const NewPlus = styled.span`
	width: 27px;
	font-size: 18px;
`;

const NextButton = styled.button`
	width: 98px;
	height: 46px;
	margin: 32px 0 0 890px;
	padding: 0 0 5px;
	flex-shrink: 0;
	border: none;
	border-radius: 6px;
	background: #0a5fbd;
	color: #fff;
	font-family: ${soft};
	font-size: 17px;
`;
